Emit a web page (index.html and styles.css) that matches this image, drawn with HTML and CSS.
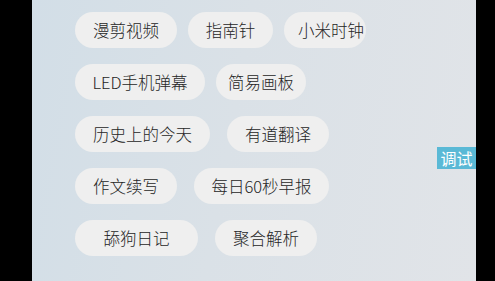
FILE: index.html
```html
<!DOCTYPE html>
<html lang="zh-CN">
<head>
    <meta charset="UTF-8">
    <meta name="viewport" content="width=device-width, initial-scale=1.0">
    <title>工具箱</title>
    <link rel="stylesheet" href="styles.css">
</head>
<body>
    <div class="screen">
        <div class="edge edge-left"></div>
        <div class="main">
            <div class="rows">
                <div class="row">
                    <div class="pill w102">漫剪视频</div>
                    <div class="pill w85">指南针</div>
                    <div class="pill w82 shift">小米时钟</div>
                </div>
                <div class="row">
                    <div class="pill w130">LED手机弹幕</div>
                    <div class="pill w90">简易画板</div>
                </div>
                <div class="row wide">
                    <div class="pill w135">历史上的今天</div>
                    <div class="pill w102">有道翻译</div>
                </div>
                <div class="row wide">
                    <div class="pill w102">作文续写</div>
                    <div class="pill w135">每日60秒早报</div>
                </div>
                <div class="row wide">
                    <div class="pill w123">舔狗日记</div>
                    <div class="pill w102">聚合解析</div>
                </div>
            </div>
            <div class="debug">调试</div>
        </div>
        <div class="edge edge-right"></div>
    </div>
</body>
</html>
```

FILE: styles.css
```css
*{
    margin: 0;
    padding: 0;
    box-sizing: border-box;
}
body{
    background-color: black;
    font-family: "Noto Sans CJK SC", "Noto Sans", sans-serif;
}
.screen{
    display: flex;
    width: 495px;
    height: 281px;
}
.edge{
    background-color: black;
}
.edge-left{
    width: 32px;
}
.edge-right{
    width: 19px;
}
.main{
    position: relative;
    flex: 1;
    background: linear-gradient(100deg, #d2dee7 0%, #dae1e7 45%, #e1e4e8 100%);
    padding: 12px 0 0 43px;
}
.rows{
    display: flex;
    flex-direction: column;
    gap: 16px;
}
.row{
    display: flex;
    gap: 11px;
}
.row.wide{
    gap: 17px;
}
.pill{
    height: 36px;
    border-radius: 18px;
    background-color: #efefef;
    color: #262626;
    font-size: 16.5px;
    font-weight: 300;
    display: flex;
    align-items: center;
    justify-content: center;
    white-space: nowrap;
}
.pill.shift{
    padding-left: 12px;
}
.w82{ width: 82px; }
.w85{ width: 85px; }
.w90{ width: 90px; }
.w102{ width: 102px; }
.w123{ width: 123px; }
.w130{ width: 130px; }
.w135{ width: 135px; }
.debug{
    position: absolute;
    right: 0;
    top: 147px;
    width: 39px;
    height: 22px;
    background-color: #5ab9d6;
    color: white;
    font-size: 16px;
    line-height: 22px;
    text-align: center;
}
```
